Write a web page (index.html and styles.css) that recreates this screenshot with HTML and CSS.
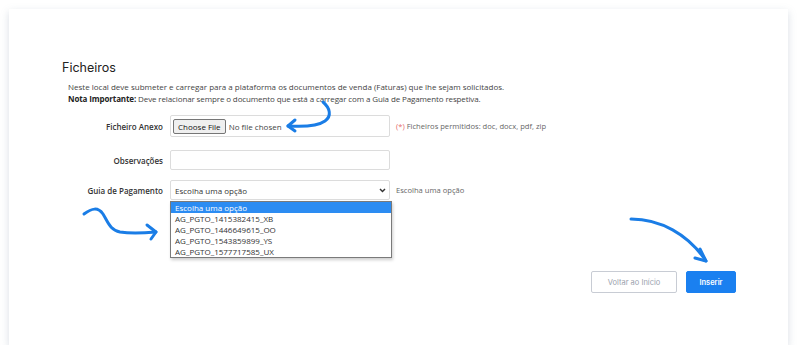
FILE: index.html
```html
<!DOCTYPE html>
<html lang="pt-PT">
  <head>
    <title>Ficheiros</title>
    <meta charset="utf-8" />
    <link rel="stylesheet" href="styles.css">
  </head>
  <body>
    <div class="cartao">
      <h2 class="titulo">Ficheiros</h2>
      <p class="descricao">
        Neste local deve submeter e carregar para a plataforma os documentos de venda (Faturas) que lhe sejam solicitados.<br />
        <span class="nota"><b>Nota Importante:</b> Deve relacionar sempre o documento que está a carregar com a Guia de Pagamento respetiva.</span>
      </p>
      <form class="formulario">
        <div class="linha primeira">
          <label class="rotulo">Ficheiro Anexo</label>
          <div class="campo alto">
            <span class="botao-ficheiro">Choose File</span>
            <span class="sem-ficheiro">No file chosen</span>
          </div>
          <span class="ajuda"><span class="obrigatorio">(*)</span> Ficheiros permitidos: doc, docx, pdf, zip</span>
        </div>
        <div class="linha">
          <label class="rotulo">Observações</label>
          <div class="campo"></div>
        </div>
        <div class="linha">
          <label class="rotulo">Guia de Pagamento</label>
          <div class="campo seletor">
            <span>Escolha uma opção</span>
            <svg class="seta-seletor" width="7" height="5" viewBox="0 0 7 5"><path d="M1 1 L3.5 3.6 L6 1" fill="none" stroke="#333" stroke-width="1.4"/></svg>
            <ul class="lista">
              <li class="ativo">Escolha uma opção</li>
              <li>AG_PGTO_1415382415_XB</li>
              <li>AG_PGTO_1446649615_OO</li>
              <li>AG_PGTO_1543859899_YS</li>
              <li>AG_PGTO_1577717585_UX</li>
            </ul>
          </div>
          <span class="ajuda">Escolha uma opção</span>
        </div>
        <div class="acoes">
          <button type="button" class="btn voltar">Voltar ao Início</button>
          <button type="button" class="btn inserir">Inserir</button>
        </div>
      </form>
    </div>
    <svg class="setas" width="800" height="360" viewBox="0 0 800 360">
      <g fill="none" stroke="#1a7de6" stroke-width="3" stroke-linecap="round" stroke-linejoin="round">
        <path d="M323 102 C330 108 332 116 325 121 C318 126 304 127 288 126"/>
        <path d="M295 120 L288 126 L295 131"/>
        <path d="M84 214 C92 208 98 207 103 214 C108 222 110 230 120 232 C132 234 145 233 156 232"/>
        <path d="M147 225 L156 232 L151 239"/>
        <path d="M631 219 C660 219 688 234 706 261"/>
        <path d="M700 249 L706 261 L695 258"/>
      </g>
    </svg>
  </body>
</html>
```

FILE: styles.css
```css
body {
  margin: 0;
  background: #fff;
  font-family: "Open Sans", "Noto Sans", sans-serif;
  color: #333;
}
.cartao {
  margin: 9px 12px 0 9px;
  height: 336px;
  box-sizing: border-box;
  padding: 51px 52px 0 53px;
  background: #fff;
  box-shadow: 0 3px 8px rgba(120, 135, 160, 0.28);
}
.titulo {
  margin: 0;
  font-family: "Inter", "Noto Sans", sans-serif;
  font-weight: 400;
  font-size: 12.5px;
  line-height: 16px;
  color: #222;
}
.descricao {
  margin: 5px 0 0 6px;
  font-size: 8px;
  line-height: 12px;
  color: #444;
}
.nota {
  letter-spacing: -0.12px;
}
.descricao b {
  font-weight: 700;
  color: #222;
}
.linha {
  display: flex;
  align-items: center;
  margin-top: 10px;
}
.linha:nth-child(2) {
  margin-top: 13px;
}
.rotulo {
  width: 101px;
  text-align: right;
  font-size: 8px;
  font-weight: 600;
  color: #333;
  margin-right: 7px;
}
.campo {
  position: relative;
  width: 220px;
  height: 20px;
  box-sizing: border-box;
  border: 1px solid #dcdcdc;
  border-radius: 2px;
  display: flex;
  align-items: center;
  font-size: 8px;
}
.campo.alto {
  height: 22px;
  padding-left: 2px;
}
.botao-ficheiro {
  height: 15px;
  line-height: 13px;
  box-sizing: border-box;
  padding: 0 4px;
  border: 1px solid #767676;
  border-radius: 2px;
  background: #efefef;
  color: #111;
}
.sem-ficheiro {
  margin-left: 3px;
  color: #444;
}
.ajuda {
  margin-left: 6px;
  font-size: 7.6px;
  color: #666;
}
.obrigatorio {
  color: #e46b6b;
}
.seletor {
  padding-left: 4px;
  color: #333;
}
.seta-seletor {
  position: absolute;
  right: 3px;
  top: 7px;
}
.lista {
  position: absolute;
  left: -1px;
  top: 20px;
  width: 220px;
  margin: 0;
  padding: 0;
  list-style: none;
  background: #fff;
  border: 1px solid #7a7a7a;
  box-shadow: 1px 2px 3px rgba(0, 0, 0, 0.2);
  font-size: 8px;
  z-index: 2;
}
.lista li {
  height: 11px;
  line-height: 11px;
  padding-left: 4px;
  color: #333;
}
.lista li.ativo {
  background: #2c8cf2;
  color: #fff;
}
.acoes {
  display: flex;
  justify-content: flex-end;
  gap: 9px;
  margin-top: 71px;
}
.btn {
  height: 22px;
  box-sizing: border-box;
  border-radius: 2px;
  font-family: "Inter", "Noto Sans", sans-serif;
  font-size: 7.5px;
  padding: 0;
}
.voltar {
  width: 86px;
  border: 1px solid #c8ccd4;
  background: #fff;
  color: #9aa2ad;
}
.inserir {
  width: 50px;
  border: 1px solid #1a80f0;
  background: #1a80f0;
  color: #fff;
  font-weight: 600;
}
.setas {
  position: absolute;
  left: 0;
  top: 0;
  pointer-events: none;
}
```
